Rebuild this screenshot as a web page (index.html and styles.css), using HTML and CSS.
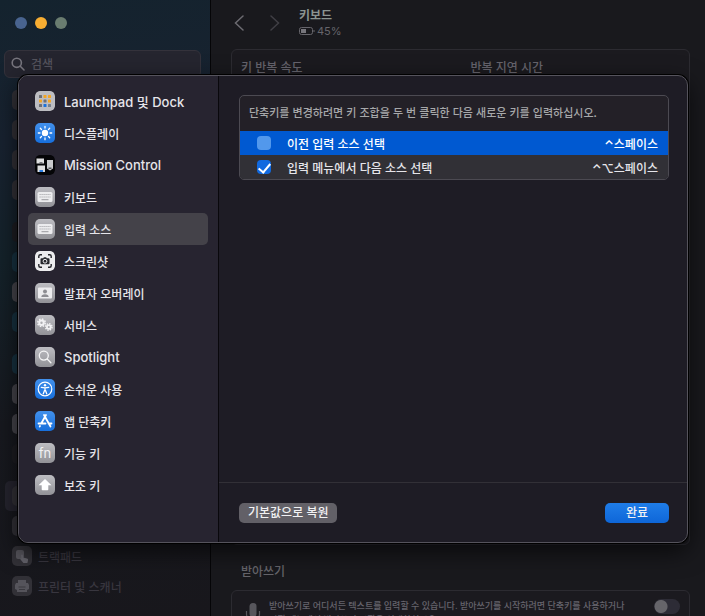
FILE: index.html
```
<!DOCTYPE html>
<html lang="ko">
  <head>
    <meta charset="utf-8">
    <title>키보드</title>
    <link rel="stylesheet" href="styles.css">
  </head>
  <body>

    <!-- Settings window behind the sheet -->
    <div class="window">
      <aside class="sidebar">
        <div class="lights">
          <span class="light blue"></span>
          <span class="light yellow"></span>
          <span class="light green"></span>
        </div>
        <label class="search">
          <svg width="14" height="14" viewBox="0 0 14 14" fill="none" stroke="#77757e" stroke-width="1.6" stroke-linecap="round"><circle cx="5.8" cy="5.8" r="4.6"/><path d="M9.3 9.3L13 13"/></svg>
          <input type="text" placeholder="검색" aria-label="검색">
        </label>
        <nav class="side-nav">
          <ul>
            <li><span class="dim-icon"></span></li>
            <li><span class="dim-icon"></span></li>
            <li><span class="dim-icon"></span></li>
            <li><span class="dim-icon"></span></li>
          </ul>
          <ul>
            <li><span class="dim-icon dark"></span></li>
            <li><span class="dim-icon teal"></span></li>
            <li><span class="dim-icon light-gray"></span></li>
            <li><span class="dim-icon teal"></span></li>
          </ul>
          <ul>
            <li><span class="dim-icon teal"></span></li>
            <li><span class="dim-icon light-gray"></span></li>
            <li><span class="dim-icon light-gray"></span></li>
            <li><span class="dim-icon dark"></span></li>
          </ul>
          <ul>
            <li class="current"><span class="dim-icon"></span></li>
            <li><span class="dim-icon"></span></li>
            <li>
              <span class="dim-icon"><svg width="20" height="20" viewBox="0 0 20 20"><rect x="4" y="4" width="8" height="9" rx="2" fill="#55545b"/><path d="M9 9.500a1 1 0 0 1 2 0v2l4 1c1 .3 1.300 1 1 2l-.6 2.500h-4L8.500 13.500c-.6-1 .2-1.500 1-1z" fill="#63626a"/></svg></span>
              <a href="#">트랙패드</a>
            </li>
            <li>
              <span class="dim-icon"><svg width="20" height="20" viewBox="0 0 20 20" fill="#55545b"><path d="M6 4h8v3H6zM4 7h12l1 2v4l-2 1v2H5v-2l-2-1V9z"/><path d="M6.500 11h7M7 13.500h6" stroke="#3a393f"/></svg></span>
              <a href="#">프린터 및 스캐너</a>
            </li>
          </ul>
        </nav>
      </aside>

      <main class="main">
        <header class="toolbar">
          <button class="nav-btn" aria-label="뒤로"><svg width="10" height="16" viewBox="0 0 10 16"><path d="M9 1L1.500 8L9 15"/></svg></button>
          <button class="nav-btn off" aria-label="앞으로"><svg width="10" height="16" viewBox="0 0 10 16"><path d="M1 1l7.500 7L1 15"/></svg></button>
          <div>
            <h1>키보드</h1>
            <div class="battery">
              <svg width="16" height="8" viewBox="0 0 16 8"><rect x=".5" y=".5" width="13" height="7" rx="2" fill="none" stroke="#66656b"/><rect x="2" y="2" width="5" height="4" fill="#77767c"/><path d="M15 3v2" stroke="#66656b"/></svg>45%
            </div>
          </div>
        </header>
        <section class="card repeat">
          <span>키 반복 속도</span>
          <span>반복 지연 시간</span>
        </section>
        <h2>받아쓰기</h2>
        <section class="card dictation">
          <svg width="16" height="24" viewBox="0 0 16 24"><rect x="4.500" y="0" width="7" height="14" rx="3.500" fill="#57565c"/><path d="M1.500 8v3a6.500 6.500 0 0 0 13 0V8M8 18v4" fill="none" stroke="#57565c" stroke-width="1.200"/></svg>
          <label for="dictation">받아쓰기로 어디서든 텍스트를 입력할 수 있습니다. 받아쓰기를 시작하려면 단축키를 사용하거나<br>편집 메뉴에서 받아쓰기 시작을 선택하십시오.</label>
          <input class="switch" type="checkbox" id="dictation">
        </section>
      </main>
    </div>

    <!-- Shortcut sheet -->
    <div class="sheet" role="dialog" aria-label="단축키">
      <nav class="categories">
        <a class="latin" href="#">
          <svg class="icon" viewBox="0 0 20 20"><rect width="20" height="20" rx="4.500" fill="#bdbdc1"/><g fill="#6f7075"><rect x="4" y="4" width="3" height="3" rx=".6"/><rect x="4" y="13" width="3" height="3" rx=".6"/><rect x="8.500" y="8.500" width="3" height="3" rx=".6"/></g><g fill="#f5a623"><rect x="8.500" y="4" width="3" height="3" rx=".6"/><rect x="13" y="4" width="3" height="3" rx=".6"/><rect x="4" y="8.500" width="3" height="3" rx=".6"/><rect x="13" y="8.500" width="3" height="3" rx=".6"/></g><g fill="#1b72dc"><rect x="8.500" y="13" width="3" height="3" rx=".6"/></g><rect x="13" y="13" width="3" height="3" rx=".6" fill="#77808c"/></svg>
          Launchpad 및 Dock
        </a>
        <a href="#">
          <svg class="icon blue-icon" viewBox="0 0 20 20"><circle cx="10" cy="10" r="3.200" fill="#fff"/><path d="M10 3.300v1.700M10 15v1.700M3.300 10H5M15 10h1.700M5.300 5.300l1.200 1.200M13.500 13.500l1.200 1.200M14.700 5.300l-1.200 1.200M6.500 13.500l-1.200 1.200" stroke="#fff" stroke-width="1.300" stroke-linecap="round"/></svg>
          디스플레이
        </a>
        <a class="latin" href="#">
          <svg class="icon" viewBox="0 0 20 20"><rect width="20" height="20" rx="4.500" fill="#050507"/><path d="M1.500 3.500h7.500v5H1.500zM2.500 10.500h7.500v6.500H2.500z" fill="#dededf"/><path d="M12 5h6v8.500l-3 2-3-2z" fill="#c9cacd"/><path d="M4.500 7.200h3v1.300h-3zM13.500 12.500h3V14h-3z" fill="#55565b"/><path d="M4.500 15h3.500v2H4.500z" fill="#2a7de0"/></svg>
          Mission Control
        </a>
        <a href="#">
          <svg class="icon gray-icon" viewBox="0 0 20 20"><rect x="2.500" y="5" width="15" height="10" rx="1.500" fill="#ececee"/><path d="M4.500 7.500h11M4.500 10h11" stroke="#a9a9ad" stroke-width="1.200" stroke-dasharray="1.200 .8"/><path d="M6.500 12.700h7" stroke="#a9a9ad" stroke-width="1.200"/></svg>
          키보드
        </a>
        <a class="selected" href="#">
          <svg class="icon gray-icon" viewBox="0 0 20 20"><rect x="2.500" y="5" width="15" height="10" rx="1.500" fill="#ececee"/><path d="M4.500 7.500h11M4.500 10h11" stroke="#a9a9ad" stroke-width="1.200" stroke-dasharray="1.200 .8"/><path d="M6.500 12.700h7" stroke="#a9a9ad" stroke-width="1.200"/></svg>
          입력 소스
        </a>
        <a href="#">
          <svg class="icon" viewBox="0 0 20 20"><rect width="20" height="20" rx="4.500" fill="#ececee"/><path d="M3.800 7V5.300q0-1.500 1.500-1.500H7M13 3.800h1.700q1.500 0 1.500 1.500V7M16.200 13v1.700q0 1.500-1.500 1.500H13M7 16.200H5.300q-1.500 0-1.500-1.500V13" fill="none" stroke="#25262b" stroke-width="1.400"/><path d="M6.500 7.200h1.800l.6-1h2.200l.6 1h1.800q1 0 1 1v4q0 1-1 1h-7q-1 0-1-1v-4q0-1 1-1z" fill="#25262b"/><circle cx="10" cy="10.200" r="1.900" fill="none" stroke="#ececee"/></svg>
          스크린샷
        </a>
        <a href="#">
          <svg class="icon gray-icon" viewBox="0 0 20 20"><rect x="3" y="4.500" width="14" height="11" rx="1" fill="#ececee"/><circle cx="10" cy="8.500" r="2" fill="#8d8d92"/><path d="M6.300 14q.2-2.800 3.700-2.800t3.700 2.800z" fill="#8d8d92"/></svg>
          발표자 오버레이
        </a>
        <a href="#">
          <svg class="icon gray-icon" viewBox="0 0 20 20" fill="none" stroke="#f1f1f3"><circle cx="6.500" cy="7.800" r="2.200" stroke-width="2"/><circle cx="6.500" cy="7.800" r="3.700" stroke-width="1.600" stroke-dasharray="1.600 1.300"/><circle cx="13.800" cy="12" r="1.900" stroke-width="1.800"/><circle cx="13.800" cy="12" r="3.200" stroke-width="1.500" stroke-dasharray="1.400 1.100"/></svg>
          서비스
        </a>
        <a class="latin" href="#">
          <svg class="icon gray-icon" viewBox="0 0 20 20" fill="none" stroke="#f5f5f6" stroke-width="1.300" stroke-linecap="round"><circle cx="8.800" cy="8.600" r="4.500"/><path d="M12.200 12l3.700 3.700"/></svg>
          Spotlight
        </a>
        <a href="#">
          <svg class="icon blue-icon" viewBox="0 0 20 20"><circle cx="10" cy="10" r="6.800" fill="none" stroke="#fff" stroke-width="1.200"/><circle cx="10" cy="6.200" r="1.200" fill="#fff"/><path d="M6.300 8.300l3.700.5 3.700-.5M10 8.800v2.700M9.600 11.300L8.300 14.800M10.400 11.300l1.300 3.500" fill="none" stroke="#fff" stroke-width="1.300" stroke-linecap="round"/></svg>
          손쉬운 사용
        </a>
        <a href="#">
          <svg class="icon blue-icon" viewBox="0 0 20 20" stroke="#fff" stroke-width="1.800" stroke-linecap="round"><path d="M11 4L6.200 12.500M9 4l6.500 11.500M3.500 12.500h7M13.500 12.500h3M5 15l-.3.500"/></svg>
          앱 단축키
        </a>
        <a href="#">
          <span class="icon gray-icon fn">fn</span>
          기능 키
        </a>
        <a href="#">
          <svg class="icon gray-icon" viewBox="0 0 20 20"><path d="M10 4l6.500 6.300h-3.200v4.200q0 .8-.8.800h-5q-.8 0-.8-.8v-4.200H3.500z" fill="#fff"/></svg>
          보조 키
        </a>
      </nav>

      <div class="content">
        <div class="shortcuts">
          <p>단축키를 변경하려면 키 조합을 두 번 클릭한 다음 새로운 키를 입력하십시오.</p>
          <table>
            <tr class="active">
              <td class="check"><input type="checkbox" id="prev"></td>
              <td><label for="prev">이전 입력 소스 선택</label></td>
              <td class="keys"><span class="mod">⌃</span>스페이스</td>
            </tr>
            <tr>
              <td class="check"><input type="checkbox" id="next" checked></td>
              <td><label for="next">입력 메뉴에서 다음 소스 선택</label></td>
              <td class="keys"><span class="mod">⌃⌥</span>스페이스</td>
            </tr>
          </table>
        </div>
        <footer>
          <button class="btn">기본값으로 복원</button>
          <button class="btn primary">완료</button>
        </footer>
      </div>
    </div>

  </body>
</html>
```
FILE: styles.css
```
* { box-sizing: border-box; }

body {
  margin: 0;
  overflow: hidden;
  background: #19191d;
  color: #e6e5ea;
  font-family: Inter, "Noto Sans CJK KR", sans-serif;
  font-size: 12px;
  font-weight: 500;
}

a { color: inherit; text-decoration: none; }
button, input { font: inherit; }
ul { list-style: none; margin: 0; padding: 0; }

.window {
  display: flex;
  height: 100vh;
  overflow: hidden;
}

/* Background sidebar */
.sidebar {
  flex: 0 0 211px;
  min-width: 0;
  border-right: 1px solid #050507;
  background: linear-gradient(170deg, #14232e 0%, #182230 22%, #14222a 40%, #17191f 65%, #18171c 100%);
}

.lights {
  display: flex;
  gap: 8px;
  padding: 17px 15px 0;
}

.light {
  width: 12px;
  height: 12px;
  border-radius: 50%;
}
.light.blue { background: #49648f; }
.light.yellow { background: #f8ae32; }
.light.green { background: #6a7d70; }

.search {
  display: flex;
  align-items: center;
  gap: 6px;
  height: 28px;
  margin: 21px 9px 0 4px;
  padding: 0 6px;
  border: 1px solid #34323b;
  border-radius: 6px;
  background: #25252f;
}
.search input {
  flex: 1;
  min-width: 0;
  padding: 0;
  border: 0;
  outline: 0;
  background: none;
  color: #77757e;
}
.search input::placeholder { color: #55545e; }

.side-nav {
  margin-top: 7px;
  padding: 0 5px;
}
.side-nav ul + ul { margin-top: 12px; }
.side-nav li {
  display: flex;
  align-items: center;
  gap: 6px;
  height: 30px;
  padding-left: 7px;
  border-radius: 5px;
  color: #38363f;
}
.side-nav .current { background: #25242e; }

.dim-icon {
  width: 20px;
  height: 20px;
  border-radius: 5px;
  background: #323137;
}
.dim-icon svg { display: block; }
.dim-icon.dark { background: #1d1d22; }
.dim-icon.teal { background: #173241; }
.dim-icon.light-gray { background: #46454c; }

/* Background pane */
.main {
  flex: 1;
  min-width: 0;
  padding: 0 15px 0 20px;
}

.toolbar {
  display: flex;
  align-items: center;
  gap: 26px;
  height: 49px;
  padding: 0 3px 3px;
}
.toolbar > div { margin-left: -7px; }
.toolbar h1 {
  margin: 0;
  font-size: 12px;
  font-weight: 700;
  line-height: 16px;
  color: #8b9490;
}

.nav-btn {
  width: 10px;
  padding: 0;
  border: 0;
  background: none;
  line-height: 0;
}
.nav-btn path {
  fill: none;
  stroke: #6c6b71;
  stroke-width: 1.5;
  stroke-linecap: round;
}
.nav-btn.off path { stroke: #403f45; }

.battery {
  display: flex;
  align-items: center;
  gap: 2px;
  color: #66656b;
  font-size: 11px;
  font-weight: 400;
  line-height: 14px;
}

.card {
  border: 1px solid #2c2b31;
  border-radius: 6px;
  background: #1b1a1f;
  color: #66646d;
}

.repeat {
  display: grid;
  grid-template-columns: 1fr 1fr;
  column-gap: 20px;
  min-height: 496px;
  padding: 8px 9px;
}

.main h2 {
  margin: 18px 10px 9px;
  color: #66656b;
  font-size: 12px;
  font-weight: 500;
  line-height: 18px;
}

.dictation {
  display: flex;
  align-items: flex-start;
  padding: 8px 9px 8px 13px;
  white-space: nowrap;
}
.dictation svg {
  flex: none;
  margin-top: 4px;
}
.dictation label {
  flex: 1;
  margin-left: 8px;
  font-size: 9px;
  line-height: 14px;
}

.switch {
  appearance: none;
  width: 26px;
  height: 15px;
  margin: 0;
  border-radius: 8px;
  background: radial-gradient(circle at 7px 50%, #66656a 6px, #2d2c36 7px);
}

/* Sheet over the window */
.sheet {
  position: absolute;
  top: 75px;
  left: 18px;
  right: 17px;
  display: flex;
  min-height: 468px;
  overflow: hidden;
  border: 1px solid #55535c;
  border-radius: 10px;
  background: #1e1c25;
  box-shadow: 0 0 0 1px #000, 0 8px 24px #000a;
}

.categories {
  flex: 0 0 200px;
  padding: 9px 10px 9px 9px;
  border-right: 1px solid #09080c;
  background: #272430;
}
.categories a {
  display: flex;
  align-items: center;
  gap: 9px;
  height: 32px;
  padding: 0 7px;
  border-radius: 5px;
}
.categories .latin { font-size: 13px; }
.categories .selected { background: #444249; }

.icon {
  flex: none;
  width: 20px;
  height: 20px;
  border-radius: 5px;
}
.blue-icon { background: linear-gradient(#4290eb, #176fdc); }
.gray-icon { background: linear-gradient(#bdbdc2, #929297); }
.fn {
  color: #f1f1f3;
  font-size: 13px;
  font-weight: 400;
  line-height: 20px;
  text-align: center;
}

.content {
  display: flex;
  flex: 1;
  flex-direction: column;
  justify-content: space-between;
  min-width: 0;
}

.shortcuts {
  margin: 19px 18px 0 20px;
  overflow: hidden;
  border: 1px solid #4c4a52;
  border-radius: 5px;
  background: #232027;
}
.shortcuts p {
  margin: 0;
  padding: 7px 9px 10px;
  color: #a7a8aa;
  font-family: "Noto Sans CJK KR", sans-serif;
  font-size: 11px;
  line-height: 18px;
}
.shortcuts table {
  width: 100%;
  border-collapse: collapse;
}
.shortcuts tr {
  height: 24px;
  background: #313036;
}
.shortcuts tr.active {
  background: #0059d1;
  color: #fff;
}
.shortcuts td { padding: 0; }
.shortcuts .check {
  width: 47px;
  padding-left: 17px;
}
.shortcuts .keys {
  padding-right: 10px;
  text-align: right;
}
.mod {
  font-family: Inter, "DejaVu Sans", sans-serif;
  font-weight: 600;
}

.check input {
  appearance: none;
  display: block;
  width: 14px;
  height: 14px;
  margin: 0;
  border-radius: 4px;
  background: #5298ec;
}
.check input:checked {
  padding-top: 1px;
  background: #1169df;
}
.check input:checked::after {
  content: "";
  display: block;
  width: 5px;
  height: 10px;
  margin: 0 auto;
  border: solid #fff;
  border-width: 0 2px 2px 0;
  transform: rotate(40deg);
}

.content footer {
  display: flex;
  justify-content: space-between;
  padding: 20px 18px 19px 20px;
  border-top: 1px solid #323037;
}

.btn {
  height: 20px;
  padding: 0 9px;
  border: 0;
  border-radius: 5px;
  background: #626067;
  color: #f1f1f3;
  line-height: 18px;
}
.btn.primary {
  min-width: 64px;
  background: linear-gradient(#1f7de8, #0e66d8);
}
```
